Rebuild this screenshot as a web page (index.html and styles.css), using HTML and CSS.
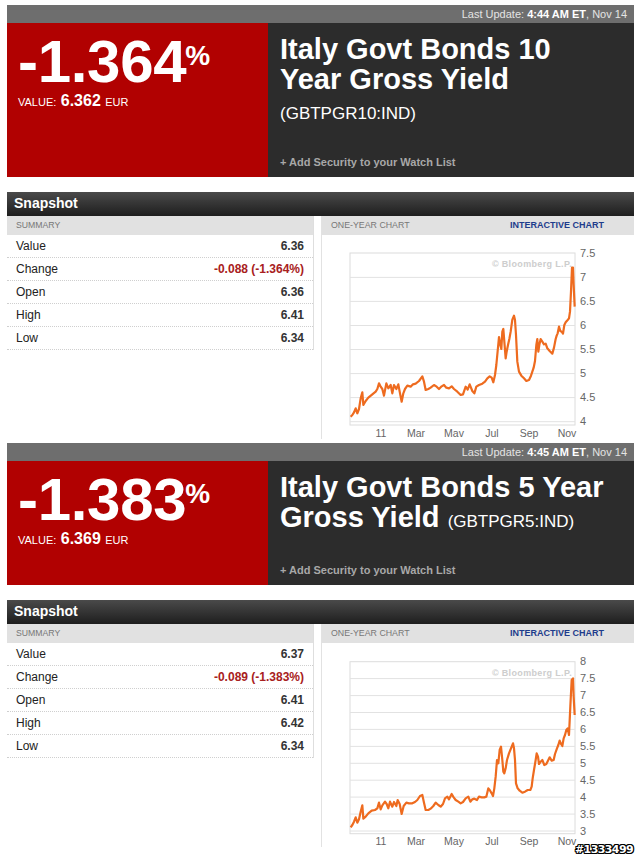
FILE: index.html
```html
<!DOCTYPE html>
<html>
<head>
<meta charset="utf-8">
<link rel="stylesheet" href="styles.css">
</head>
<body>
<div class="page">

  <section class="quote">
    <div class="update">Last Update: <b>4:44 AM ET</b>, Nov 14</div>
    <div class="hero">
      <div class="price">
        <div class="pchange">-1.364<span class="pct">%</span></div>
        <div class="value"><span class="vlabel">VALUE:</span> <b>6.362</b> <span class="vlabel">EUR</span></div>
      </div>
      <div class="info">
        <h1 class="title">Italy Govt Bonds 10 Year Gross Yield <span class="ticker">(GBTPGR10:IND)</span></h1>
        <div class="watch">+ Add Security to your Watch List</div>
      </div>
    </div>
    <div class="snap-head">Snapshot</div>
    <div class="snap-body">
      <div class="summary">
        <div class="subhead">SUMMARY</div>
        <div class="row"><span>Value</span><b>6.36</b></div>
        <div class="row"><span>Change</span><b class="neg">-0.088 (-1.364%)</b></div>
        <div class="row"><span>Open</span><b>6.36</b></div>
        <div class="row"><span>High</span><b>6.41</b></div>
        <div class="row"><span>Low</span><b>6.34</b></div>
      </div>
      <div class="chart">
        <div class="subhead chart-head"><span>ONE-YEAR CHART</span><b class="ilink">INTERACTIVE CHART</b></div>
        <svg class="plot" width="311" height="204" viewBox="0 0 311 204">
          <rect x="28" y="18" width="225" height="172" fill="#fff" stroke="#dcdcdc" stroke-width="1"/>
          <g stroke="#e2e2e2" stroke-width="1">
            <line x1="28" x2="253" y1="42.4" y2="42.4"/>
            <line x1="28" x2="253" y1="66.4" y2="66.4"/>
            <line x1="28" x2="253" y1="90.5" y2="90.5"/>
            <line x1="28" x2="253" y1="114.5" y2="114.5"/>
            <line x1="28" x2="253" y1="138.6" y2="138.6"/>
            <line x1="28" x2="253" y1="162.6" y2="162.6"/>
            <line x1="28" x2="253" y1="186.7" y2="186.7"/>
          </g>
          <text class="wm" x="250" y="32" text-anchor="end">© Bloomberg L.P.</text>
          <g class="ylab">
            <text x="258" y="22">7.5</text>
            <text x="258" y="46">7</text>
            <text x="258" y="70">6.5</text>
            <text x="258" y="94">6</text>
            <text x="258" y="118">5.5</text>
            <text x="258" y="142">5</text>
            <text x="258" y="166">4.5</text>
            <text x="258" y="190">4</text>
          </g>
          <g class="xlab" text-anchor="middle">
            <text x="59" y="202">11</text>
            <text x="94" y="202">Mar</text>
            <text x="132" y="202">Mav</text>
            <text x="170" y="202">Jul</text>
            <text x="207" y="202">Sep</text>
            <text x="245" y="202">Nov</text>
          </g>
          <g transform="translate(-13 -50) scale(0.33333)">
            <polyline class="line" points="125,695 130,690 135,682 140,670 145,685 150,672 155,640 160,622 163,660 170,648 178,638 190,628 200,620 205,612 210,595 215,605 220,612 225,632 232,595 238,610 245,600 250,625 255,600 262,612 268,598 272,620 278,650 283,625 288,612 295,602 305,605 312,598 320,596 330,588 340,574 345,590 350,615 358,612 365,608 375,600 383,605 390,612 398,604 405,600 412,608 420,610 428,604 435,612 445,620 455,630 462,628 470,605 476,614 482,598 490,618 496,625 502,605 510,600 520,596 528,590 535,580 542,574 548,578 553,592 558,570 562,540 566,498 570,456 574,480 577,492 580,440 583,432 586,470 590,520 593,500 597,480 601,462 605,440 610,404 615,392 618,405 621,450 625,530 630,560 637,572 645,580 652,588 660,585 666,572 670,560 674,548 678,528 682,480 685,462 688,500 691,480 695,462 700,470 705,478 710,476 715,490 722,498 730,506 735,488 740,462 743,452 746,445 750,425 754,438 758,440 762,446 766,420 770,412 776,405 780,400 783,380 786,320 789,248 792,248 794,300 797,365"/>
          </g>
        </svg>
      </div>
    </div>
  </section>

  <section class="quote">
    <div class="update">Last Update: <b>4:45 AM ET</b>, Nov 14</div>
    <div class="hero">
      <div class="price">
        <div class="pchange">-1.383<span class="pct">%</span></div>
        <div class="value"><span class="vlabel">VALUE:</span> <b>6.369</b> <span class="vlabel">EUR</span></div>
      </div>
      <div class="info">
        <h1 class="title">Italy Govt Bonds 5 Year Gross Yield <span class="ticker">(GBTPGR5:IND)</span></h1>
        <div class="watch">+ Add Security to your Watch List</div>
      </div>
    </div>
    <div class="snap-head">Snapshot</div>
    <div class="snap-body">
      <div class="summary">
        <div class="subhead">SUMMARY</div>
        <div class="row"><span>Value</span><b>6.37</b></div>
        <div class="row"><span>Change</span><b class="neg">-0.089 (-1.383%)</b></div>
        <div class="row"><span>Open</span><b>6.41</b></div>
        <div class="row"><span>High</span><b>6.42</b></div>
        <div class="row"><span>Low</span><b>6.34</b></div>
      </div>
      <div class="chart">
        <div class="subhead chart-head"><span>ONE-YEAR CHART</span><b class="ilink">INTERACTIVE CHART</b></div>
        <svg class="plot" width="311" height="204" viewBox="0 0 311 204">
          <rect x="28" y="18.7" width="225" height="172" fill="#fff" stroke="#dcdcdc" stroke-width="1"/>
          <g stroke="#e2e2e2" stroke-width="1">
            <line x1="28" x2="253" y1="35.6" y2="35.6"/>
            <line x1="28" x2="253" y1="52.6" y2="52.6"/>
            <line x1="28" x2="253" y1="69.5" y2="69.5"/>
            <line x1="28" x2="253" y1="86.4" y2="86.4"/>
            <line x1="28" x2="253" y1="103.4" y2="103.4"/>
            <line x1="28" x2="253" y1="120.3" y2="120.3"/>
            <line x1="28" x2="253" y1="137.2" y2="137.2"/>
            <line x1="28" x2="253" y1="154.1" y2="154.1"/>
            <line x1="28" x2="253" y1="171.1" y2="171.1"/>
            <line x1="28" x2="253" y1="188" y2="188"/>
          </g>
          <text class="wm" x="250" y="33" text-anchor="end">© Bloomberg L.P.</text>
          <g class="ylab">
            <text x="258" y="22">8</text>
            <text x="258" y="39">7.5</text>
            <text x="258" y="56">7</text>
            <text x="258" y="73">6.5</text>
            <text x="258" y="90">6</text>
            <text x="258" y="107">5.5</text>
            <text x="258" y="124">5</text>
            <text x="258" y="141">4.5</text>
            <text x="258" y="158">4</text>
            <text x="258" y="175">3.5</text>
            <text x="258" y="192">3</text>
          </g>
          <g class="xlab" text-anchor="middle">
            <text x="59" y="202">11</text>
            <text x="94" y="202">Mar</text>
            <text x="132" y="202">May</text>
            <text x="170" y="202">Jul</text>
            <text x="207" y="202">Sep</text>
            <text x="245" y="202">Nov</text>
          </g>
          <g transform="translate(-13 -23) scale(0.33333)">
            <polyline class="line" points="125,622 130,615 135,605 140,592 145,608 150,598 155,575 160,556 163,596 170,590 178,580 188,572 198,570 205,565 210,548 215,568 220,556 228,545 233,552 238,565 243,545 250,560 255,546 262,558 266,540 272,552 278,582 284,558 292,548 300,550 310,550 318,546 325,540 333,528 340,525 345,548 350,570 358,570 365,566 373,558 380,548 388,555 395,560 402,552 408,535 415,530 420,538 428,522 434,532 440,540 448,545 455,550 462,546 470,535 478,530 484,545 490,538 496,536 504,540 510,530 518,532 526,532 532,530 538,505 542,510 548,520 552,528 556,505 560,470 564,420 568,430 572,390 576,380 580,420 583,455 586,460 590,445 594,420 600,400 606,385 612,370 615,385 618,420 621,490 626,505 632,512 640,518 648,515 656,510 664,510 668,500 671,475 675,450 680,420 683,400 687,410 690,432 695,425 700,420 706,435 712,432 718,420 722,412 728,422 734,420 738,402 744,385 748,375 752,362 756,372 760,378 764,355 768,345 772,330 776,325 780,345 784,260 788,180 792,175 794,230 797,285"/>
          </g>
        </svg>
      </div>
    </div>
  </section>

</div>
<div class="stamp">#1333499</div>
</body>
</html>
```

FILE: styles.css
```css
html, body {
  margin: 0;
  padding: 0;
  background: #fff;
}

body {
  font-family: "Liberation Sans", Arial, Helvetica, sans-serif;
  color: #222;
}

.page {
  padding: 5px 6px 0 7px;
  width: 627px;
}

.quote {
  margin-bottom: 4px;
}

.update {
  height: 18px;
  line-height: 18px;
  background: #6e6e6e;
  color: #e4e4e4;
  font-size: 11px;
  text-align: right;
  padding-right: 7px;
}

.update b {
  color: #fff;
}

.hero {
  display: flex;
}

.price {
  width: 250px;
  background: #b10101;
  padding: 9px 0 0 11px;
  color: #fff;
}

.pchange {
  font-size: 60px;
  font-weight: bold;
  line-height: 60px;
  height: 60px;
  white-space: nowrap;
  letter-spacing: -0.3px;
}

.pct {
  font-size: 28px;
  line-height: 1;
  vertical-align: 17px;
  margin-left: -1px;
  letter-spacing: 0;
}

.value {
  font-size: 16px;
  line-height: 16px;
  margin-top: 1px;
}

.value b {
  font-size: 16px;
}

.vlabel {
  font-size: 11px;
}

.info {
  flex: 1;
  background: #2c2c2c;
  padding: 11px 19px 8px 12px;
  display: flex;
  flex-direction: column;
}

.title {
  margin: 0;
  color: #fff;
  font-size: 29px;
  line-height: 30px;
  font-weight: bold;
}

.ticker {
  font-size: 17px;
  line-height: 17px;
  font-weight: normal;
}

.watch {
  margin-top: 31px;
  font-size: 11px;
  line-height: 14px;
  font-weight: bold;
  color: #a8a8a8;
}

.snap-head {
  margin-top: 15px;
  height: 24px;
  line-height: 23px;
  background: linear-gradient(#4a4a4a, #1e1e1e);
  color: #fff;
  font-size: 14px;
  font-weight: bold;
  padding-left: 7px;
}

.snap-body {
  display: flex;
  gap: 7px;
}

.summary {
  width: 306px;
  border-right: 1px solid #dedede;
  align-self: flex-start;
}

.subhead {
  height: 19px;
  line-height: 19px;
  background: #e1e1e1;
  color: #777;
  font-size: 8.7px;
  padding-left: 9px;
}

.row {
  height: 22px;
  line-height: 22px;
  border-bottom: 1px dotted #cfcfcf;
  display: flex;
  justify-content: space-between;
  padding: 0 9px 0 9px;
  font-size: 12px;
}

.row span {
  color: #222;
}

.row b {
  color: #333;
}

.row b.neg {
  color: #a82020;
}

.chart {
  flex: 1;
  border-left: 1px solid #e2e2e2;
}

.chart-head {
  display: flex;
  justify-content: space-between;
  padding-right: 30px;
  font-size: 8.8px;
}

.ilink {
  color: #1e3c8c;
  font-size: 9px;
}

.plot {
  display: block;
}

.plot text {
  font-family: "Liberation Sans", Arial, sans-serif;
}

.ylab text {
  font-size: 11px;
  fill: #666;
}

.xlab text {
  font-size: 10.5px;
  fill: #666;
}

.wm {
  font-size: 9px;
  font-weight: bold;
  fill: #cdcdcd;
  letter-spacing: 0.35px;
}

.line {
  fill: none;
  stroke: #ee6b1f;
  stroke-width: 2.2;
  stroke-linejoin: round;
  vector-effect: non-scaling-stroke;
}

.stamp {
  position: absolute;
  left: 575px;
  top: 843px;
  font-family: "DejaVu Sans", sans-serif;
  font-weight: bold;
  font-size: 11px;
  letter-spacing: -0.6px;
  color: #fff;
  text-shadow: 1px 0 0 #000, -1px 0 0 #000, 0 1px 0 #000, 0 -1px 0 #000,
    1px 1px 0 #000, -1px -1px 0 #000, 1px -1px 0 #000, -1px 1px 0 #000;
}
```
